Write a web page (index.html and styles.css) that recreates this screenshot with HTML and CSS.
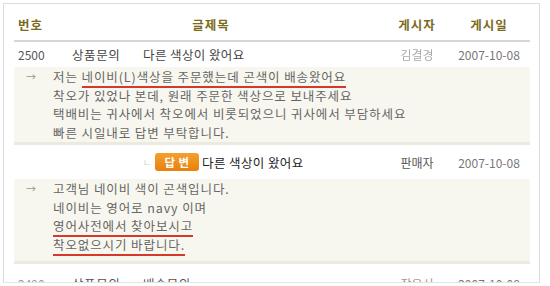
FILE: index.html
```html
<!DOCTYPE html>
<html>
<head>
<meta charset="utf-8" />
<title>상품문의 게시판</title>
<link rel="stylesheet" href="styles.css">
</head>
<body>
<div class="board">
  <div class="row head">
    <div class="c-num">번호</div>
    <div class="c-title">글제목</div>
    <div class="c-writer">게시자</div>
    <div class="c-date">게시일</div>
  </div>

  <div class="row">
    <div class="c-num">2500</div>
    <div class="c-cat">상품문의</div>
    <div class="c-subj">다른 색상이 왔어요</div>
    <div class="c-writer blur">김결경</div>
    <div class="c-date">2007-10-08</div>
  </div>
  <div class="content">
    <div class="arrow">→</div>
    <div class="text">
      <p>저는 <span class="mark">네이비(L)색상을 주문했는데 곤색이 배송왔어요 </span></p>
      <p>착오가 있었나 본데, 원래 주문한 색상으로 보내주세요</p>
      <p>택배비는 귀사에서 착오에서 비롯되었으니 귀사에서 부담하세요</p>
      <p>빠른 시일내로 답변 부탁합니다.</p>
    </div>
  </div>

  <div class="row reply">
    <div class="c-num"></div>
    <div class="c-reply"><span class="tick">ㄴ</span><span class="badge">답 변</span><span class="subj-dark">다른 색상이 왔어요</span></div>
    <div class="c-writer">판매자</div>
    <div class="c-date">2007-10-08</div>
  </div>
  <div class="content answer">
    <div class="arrow">→</div>
    <div class="text">
      <p>고객님 네이비 색이 곤색입니다.</p>
      <p>네이비는 영어로 navy 이며</p>
      <p><span class="mark">영어사전에서 찾아보시고</span></p>
      <p><span class="mark">착오없으시기 바랍니다.</span></p>
    </div>
  </div>

  <div class="row last">
    <div class="c-num">2490</div>
    <div class="c-cat">상품문의</div>
    <div class="c-subj">배송문의</div>
    <div class="c-writer">작은서</div>
    <div class="c-date">2007-10-08</div>
  </div>
</div>
</body>
</html>
```

FILE: styles.css
```css
body{
	margin: 0;
	background: #fff;
	font-family: "Noto Sans CJK KR", "Noto Sans", sans-serif;
	font-size: 12px;
	color: #555;
}

.board{
	margin: 3px 10px 0 3px;
	height: 280px;
	border: 1px solid #dcdcdc;
	border-bottom-color: #e4e4e4;
	padding: 0 9px 0 10px;
	overflow: hidden;
	box-sizing: border-box;
}

.row{
	display: flex;
	align-items: center;
	height: 24px;
}

.head{
	height: 32px;
	margin-top: 4px;
	border-bottom: 2px solid #d6d6d6;
	font-weight: bold;
	font-size: 12.5px;
	letter-spacing: 1px;
	color: #7b6c1c;
}

.c-num{
	width: 58px;
	padding-left: 4px;
	box-sizing: border-box;
}

.c-title{
	flex: 1;
	text-align: center;
	padding-right: 36px;
}

.c-cat{
	width: 71px;
	color: #444;
	font-size: 12.5px;
	letter-spacing: 0.6px;
}

.c-subj{
	flex: 1;
	color: #444;
	font-size: 12.5px;
	letter-spacing: 0.4px;
}

.c-reply{
	flex: 1;
	display: flex;
	align-items: center;
	padding-left: 71px;
	font-size: 12.5px;
	letter-spacing: 0.4px;
}

.c-writer{
	width: 62px;
	text-align: center;
}

.c-date{
	width: 82px;
	text-align: center;
	color: #777;
}

.head .c-writer,
.head .c-date{
	color: #7b6c1c;
}

.blur{
	color: #aaa;
	filter: blur(0.6px);
}

.tick{
	color: #ccc;
	font-size: 9px;
	width: 12px;
}

.badge{
	display: inline-block;
	width: 44px;
	height: 18px;
	line-height: 18px;
	text-align: center;
	background: linear-gradient(#f4a030, #e9800c);
	border-radius: 3px;
	color: #fff;
	font-weight: bold;
	font-size: 11.5px;
	margin-right: 3px;
}

.subj-dark{
	color: #222;
}

.reply{
	height: 32px;
	margin-top: 1px;
}

.content{
	display: flex;
	background: #f8f7ef;
	border-bottom: 3px solid #eceade;
	padding: 1px 0 0 0;
	margin: 1px 0 0 0;
}

.content.answer{
	padding-bottom: 7px;
}

.arrow{
	width: 39px;
	padding-left: 12px;
	box-sizing: border-box;
	color: #a89578;
	font-size: 10px;
	line-height: 18px;
}

.text p{
	margin: 0;
	line-height: 18.5px;
	font-size: 12.5px;
	letter-spacing: 0.9px;
	color: #666;
}

.mark{
	border-bottom: 2px solid #d33a2c;
}

.row.last{
	height: 22px;
	margin-top: 8px;
	color: #999;
}

.last .c-cat,
.last .c-subj{
	color: #555;
}
```
